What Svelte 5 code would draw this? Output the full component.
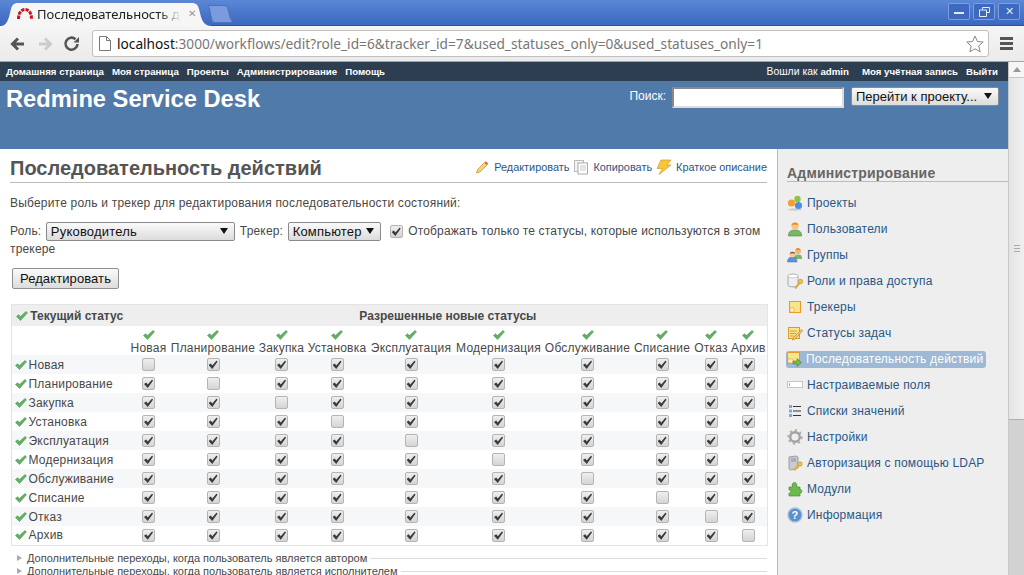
<script>
  const statuses = ['Новая', 'Планирование', 'Закупка', 'Установка', 'Эксплуатация', 'Модернизация', 'Обслуживание', 'Списание', 'Отказ', 'Архив'];
  const widths = [40, 89, 48, 63, 85, 90, 88, 61, 37, 38];

  const menu = ['Домашняя страница', 'Моя страница', 'Проекты', 'Администрирование', 'Помощь'];

  const sidebar = [
    { icon: 'projects', label: 'Проекты' },
    { icon: 'user', label: 'Пользователи' },
    { icon: 'group', label: 'Группы' },
    { icon: 'roles', label: 'Роли и права доступа' },
    { icon: 'tracker', label: 'Трекеры' },
    { icon: 'status', label: 'Статусы задач' },
    { icon: 'workflow', label: 'Последовательность действий', selected: true },
    { icon: 'field', label: 'Настраиваемые поля' },
    { icon: 'list', label: 'Списки значений' },
    { icon: 'gear', label: 'Настройки' },
    { icon: 'ldap', label: 'Авторизация с помощью LDAP' },
    { icon: 'plugin', label: 'Модули' },
    { icon: 'info', label: 'Информация' }
  ];
</script>

{#snippet check()}
  <svg class="tick" width="12" height="10" viewBox="0 0 12 10"><path d="M0.5 5.5 L2.5 3.8 L4.5 5.5 L10 0.5 L11.5 1.8 L4.5 9.5 Z" fill="#63b063" stroke="#3f8f46" stroke-width="0.5" /></svg>
{/snippet}

{#snippet icon(name)}
  <svg class="side-icon" width="16" height="16" viewBox="0 0 16 16">
    {#if name === 'projects'}
      <ellipse cx="8" cy="14.5" rx="7" ry="1.2" fill="#ccc" />
      <circle cx="10.5" cy="4" r="3.2" fill="#8cc63f" />
      <circle cx="4.5" cy="8" r="3.6" fill="#f6a02c" />
      <circle cx="11.5" cy="10.5" r="3.6" fill="#4a8fe0" />
    {:else if name === 'user'}
      <path d="M1.5 14 C1.5 10 5 9 8 9 C11 9 14.5 10 14.5 14 L14.5 15 L1.5 15 Z" fill="#78b765" stroke="#4d8a41" stroke-width="0.6" />
      <circle cx="8" cy="5" r="3.6" fill="#f7c58c" />
      <path d="M4.5 4.5 C4.5 0.5 11.5 0.5 11.5 4.5 C9.5 3 6.5 3 4.5 4.5 Z" fill="#e58f1f" />
    {:else if name === 'group'}
      <path d="M7 11 C7 8 9 7.5 11 7.5 C13 7.5 15 8 15 11 L15 12 L7 12 Z" fill="#78b765" />
      <circle cx="11" cy="4" r="3" fill="#f0b678" />
      <path d="M9 3 C9 0.5 13 0.5 13 3 Z" fill="#d98a22" />
      <path d="M0.5 15 C0.5 11 3 10 5.5 10 C8 10 10 11 10 15 Z" fill="#5a93dc" stroke="#3e6fb0" stroke-width="0.5" />
      <circle cx="5.5" cy="7.5" r="2.8" fill="#f7c9a0" />
      <path d="M2.8 7 C3 4 8 4 8.2 7 C7 6 4 6 2.8 7 Z" fill="#8a4f22" />
    {:else if name === 'roles'}
      <path d="M1 3 C1 0.5 11 0.5 11 3 L11 12 C11 14.5 1 14.5 1 12 Z" fill="#eceff2" stroke="#9a9a9a" stroke-width="0.8" />
      <ellipse cx="6" cy="3" rx="5" ry="1.8" fill="#fff" stroke="#aaa" stroke-width="0.5" />
      <path d="M8 15.5 L13 9.5" stroke="#dcae3e" stroke-width="2" />
      <circle cx="13.5" cy="8.5" r="2.2" fill="#efc650" stroke="#b98c24" stroke-width="0.6" />
    {:else if name === 'tracker'}
      <rect x="2.5" y="2.5" width="11" height="11" fill="#fbe58a" stroke="#ea9a2c" />
      <path d="M3 13 L3 9 L7 9 L7 13 Z" fill="#fff6cc" stroke="#ea9a2c" stroke-width="0.6" />
    {:else if name === 'status'}
      <rect x="1.5" y="2.5" width="11" height="11" fill="#fbe58a" stroke="#d99a32" />
      <path d="M3 6 H10 M3 8.5 H9 M3 11 H7" stroke="#c98a2a" stroke-width="0.8" />
      <path d="M6 13 L14.5 4.5 L15.5 6 L7.5 14.5 L5.5 15 Z" fill="#f4cf68" stroke="#a8782a" stroke-width="0.6" />
    {:else if name === 'workflow'}
      <rect x="1.5" y="1.5" width="12" height="11" fill="#fbe58a" stroke="#ea9a2c" />
      <path d="M2 12 L2 8 L7 8 L7 12 Z" fill="#fff6cc" stroke="#ea9a2c" stroke-width="0.6" />
      <path d="M7 10 L11 10 L11 7.5 L15.5 11.5 L11 15.5 L11 13 L7 13 Z" fill="#6fbb4f" stroke="#3f8a2f" stroke-width="0.6" />
    {:else if name === 'field'}
      <rect x="0.5" y="4.5" width="15" height="6" fill="#fff" stroke="#c6c6c6" />
      <path d="M2.5 6 V9" stroke="#999" stroke-width="0.8" />
    {:else if name === 'list'}
      <path d="M6 3.5 H14 M6 8 H14 M6 12.5 H14" stroke="#333" stroke-width="1" />
      <rect x="2" y="2" width="3" height="3" fill="#7fa6de" />
      <rect x="2" y="6.5" width="3" height="3" fill="#7fa6de" />
      <rect x="2" y="11" width="3" height="3" fill="#7fa6de" />
    {:else if name === 'gear'}
      <circle cx="8" cy="8" r="4.8" fill="none" stroke="#a2a2a2" stroke-width="2.4" />
      <circle cx="8" cy="8" r="6.6" fill="none" stroke="#adadad" stroke-width="2.2" stroke-dasharray="2.2 2.9" />
    {:else if name === 'ldap'}
      <path d="M2 2 L9 1 L11 2 L11 13 L4 15 L2 14 Z" fill="#c8ccd2" stroke="#7f8790" stroke-width="0.7" />
      <path d="M4 4 H9 M4 6 H9" stroke="#70787f" stroke-width="0.7" />
      <path d="M7 15.5 L12 10" stroke="#dcae3e" stroke-width="2" />
      <circle cx="13" cy="9" r="2.2" fill="#efc650" stroke="#b98c24" stroke-width="0.6" />
    {:else if name === 'plugin'}
      <path d="M2 6 H5.5 C4.5 3 6 1.5 7.5 1.5 C9 1.5 10.5 3 9.5 6 H13 V8.5 C15.5 8 15.5 12.5 13 12 V15 H2 V12 C4.5 12.5 4.5 8.5 2 9 Z" fill="#6cba4c" stroke="#479131" stroke-width="0.7" />
    {:else if name === 'info'}
      <circle cx="8" cy="8" r="7" fill="#5c8fd0" stroke="#a9bfdc" stroke-width="1.4" />
      <text class="info-q" x="8" y="12" text-anchor="middle">?</text>
    {/if}
  </svg>
{/snippet}

<div class="chrome">
  <div class="tabstrip">
    <div class="tab">
      <svg class="tab-shape" width="212" height="23" viewBox="0 0 212 23"><path d="M0 23 C5 23 7 20 9 14 L11 6 C12 2 14 0 18 0 L192 0 C196 0 198 2 199 6 L201 14 C203 20 206 23 212 23 Z" fill="#f6f6f6" /></svg>
      <svg class="favicon" width="16" height="12" viewBox="0 0 16 12"><path d="M1.5 11 C1.5 4 5 1.5 8 1.5 C11 1.5 14.5 4 14.5 11" fill="none" stroke="#c8161d" stroke-width="3" stroke-dasharray="3.4 1" /></svg>
      <span class="tab-title">Последовательность дей</span>
      <span class="tab-close">✕</span>
    </div>
    <svg class="newtab" width="26" height="18" viewBox="0 0 26 18"><path d="M0.5 0.5 H17 C19 0.5 20 1.5 21 4 L23 12 C23.5 14 24.5 15 25.5 17.5 H8 C6 17.5 5 16 4.5 13 L2.5 4 C2 2 1.5 1 0.5 0.5 Z" fill="#7a9bdd" stroke="#4c72bd" /></svg>
    <div class="winctl">
      <span class="winbtn"><i class="min"></i></span>
      <span class="winbtn"><svg width="11" height="10" viewBox="0 0 11 10"><path d="M3.5 2.5 V0.5 H10.5 V5.5 H8 M0.5 3 H7.5 V9.5 H0.5 Z" fill="none" stroke="#e6edf9" /></svg></span>
      <span class="winbtn close">✕</span>
    </div>
  </div>
  <div class="toolbar">
    <svg width="22" height="22" viewBox="0 0 22 22"><path d="M17 11 H6 M11 5.5 L5.5 11 L11 16.5" fill="none" stroke="#555" stroke-width="3" /></svg>
    <svg width="22" height="22" viewBox="0 0 22 22"><path d="M5 11 H16 M11 5.5 L16.5 11 L11 16.5" fill="none" stroke="#ccc" stroke-width="3" /></svg>
    <svg width="22" height="22" viewBox="0 0 22 22"><path d="M16.5 11 A6 6 0 1 1 14.5 6.2" fill="none" stroke="#555" stroke-width="2.6" /><path d="M12.5 9.5 L18 9.5 L18 4 Z" fill="#555" /></svg>
    <div class="omnibox">
      <svg width="12" height="15" viewBox="0 0 12 15"><path d="M0.5 0.5 H7.5 L11.5 4.5 V14.5 H0.5 Z M7.5 0.5 V4.5 H11.5" fill="#fff" stroke="#777" /></svg>
      <span class="url"><b>localhost</b>:3000/workflows/edit?role_id=6&amp;tracker_id=7&amp;used_statuses_only=0&amp;used_statuses_only=1</span>
      <svg class="star" width="18" height="18" viewBox="0 0 18 18"><path d="M9 1 L11.4 6.5 L17.2 7 L12.8 11 L14.1 16.8 L9 13.8 L3.9 16.8 L5.2 11 L0.8 7 L6.6 6.5 Z" fill="#fff" stroke="#888" /></svg>
    </div>
    <div class="hamburger"><i></i><i></i><i></i></div>
  </div>
</div>

<div class="page">
  <div class="viewport">
    <div class="top-menu">
      {#each menu as item}<a href="#top">{item}</a>{/each}
      <span class="spacer"></span>
      <span class="loggedas">Вошли как <b>admin</b></span>
      <a href="#top">Моя учётная запись</a>
      <a href="#top">Выйти</a>
    </div>

    <header class="header">
      <h1>Redmine Service Desk</h1>
      <div class="quick">
        <label for="q">Поиск:</label>
        <input id="q" class="search" type="text" />
        <span class="sel jump"><select><option>Перейти к проекту...</option></select></span>
      </div>
    </header>

    <div class="main">
      <div class="content">
        <div class="title-row">
          <h2>Последовательность действий</h2>
          <div class="contextual">
            <svg width="16" height="16" viewBox="0 0 16 16"><path d="M2.5 14 L3.5 10.5 L10.5 3.5 L13 6 L6 13 Z" fill="#f4d27c" stroke="#c98f2e" stroke-width="0.7" /><path d="M10.5 3.5 L13 6 L14.2 4.7 L11.8 2.2 Z" fill="#e2574c" /></svg>
            <a href="#top">Редактировать</a>
            <svg width="16" height="16" viewBox="0 0 16 16"><rect x="1.5" y="1.5" width="9" height="11" fill="#f2f2f2" stroke="#bbb" /><rect x="5" y="4" width="9.5" height="11" fill="#fff" stroke="#aaa" /><path d="M7 7 H13 M7 9 H13 M7 11 H13" stroke="#bbb" stroke-width="0.8" /></svg>
            <a href="#top">Копировать</a>
            <svg width="16" height="16" viewBox="0 0 16 16"><path d="M5 1 H15 L11 6 H15 L3 15.5 L6.5 9.5 H1 Z" fill="#f6c737" stroke="#d49a22" stroke-width="0.7" /></svg>
            <a href="#top">Краткое описание</a>
          </div>
        </div>

        <p class="intro">Выберите роль и трекер для редактирования последовательности состояний:</p>

        <div class="filters">
          Роль:
          <span class="sel role"><select><option>Руководитель</option></select></span>
          Трекер:
          <span class="sel tracker"><select><option>Компьютер</option></select></span>
          <input class="cb used" type="checkbox" checked />
          <span class="used-label">Отображать только те статусы, которые используются в этом трекере</span>
        </div>

        <button class="edit">Редактировать</button>

        <table class="workflow">
          <colgroup>
            <col class="first" />
            {#each widths as w}<col style="width: {w}px" />{/each}
          </colgroup>
          <thead>
            <tr class="head">
              <th class="cur">{@render check()} Текущий статус</th>
              <th colspan="10">Разрешенные новые статусы</th>
            </tr>
            <tr class="names">
              <td></td>
              {#each statuses as s}
                <td>{@render check()}<br />{s}</td>
              {/each}
            </tr>
          </thead>
          <tbody>
            {#each statuses as from, i}
              <tr class:odd={i % 2 === 0}>
                <td class="name">{@render check()} {from}</td>
                {#each statuses as _, j}
                  <td class="c"><input class="cb" type="checkbox" checked={i !== j} /></td>
                {/each}
              </tr>
            {/each}
          </tbody>
        </table>

        <div class="extra">
          <div class="extra-row"><span class="tri"></span><span>Дополнительные переходы, когда пользователь является автором</span><span class="line"></span></div>
          <div class="extra-row"><span class="tri"></span><span>Дополнительные переходы, когда пользователь является исполнителем</span><span class="line"></span></div>
        </div>
      </div>

      <aside class="sidebar">
        <h3>Администрирование</h3>
        <ul>
          {#each sidebar as item}
            <li class:selected={item.selected}>
              {@render icon(item.icon)}
              <a href="#top">{item.label}</a>
            </li>
          {/each}
        </ul>
      </aside>
    </div>
  </div>

  <div class="scrollbar">
    <div class="sb-btn"><i></i></div>
    <div class="sb-thumb"><i></i><i></i><i></i></div>
    <div class="sb-track"></div>
  </div>
</div>

<style>
  :global(body) {
    margin: 0;
    overflow: hidden;
    font-family: "Liberation Sans", Arial, sans-serif;
    font-size: 12px;
    color: #484848;
  }

  /* browser frame */
  .chrome { height: 62px; display: flex; flex-direction: column; }
  .tabstrip {
    height: 26px;
    background: linear-gradient(#5a87d6, #3c68bf);
    border-bottom: 1px solid #2e5199;
    box-sizing: border-box;
    display: flex;
    align-items: flex-end;
  }
  .tab {
    position: relative;
    width: 212px;
    height: 23px;
    box-sizing: border-box;
    display: flex;
    align-items: center;
    padding: 0 0 2px 17px;
    gap: 4px;
    margin-bottom: -1px;
  }
  .tab-shape { position: absolute; left: 0; top: 0; }
  .favicon, .tab-title, .tab-close { position: relative; }
  .tab-title {
    width: 144px;
    overflow: hidden;
    white-space: nowrap;
    font-family: "Noto Sans", sans-serif;
    font-size: 13px;
    color: #222;
    -webkit-mask-image: linear-gradient(to right, #000 85%, transparent);
    mask-image: linear-gradient(to right, #000 85%, transparent);
  }
  .tab-close { color: #999; font-size: 10px; margin-left: 3px; }
  .newtab { margin: 0 0 2px -5px; }
  .winctl { margin-left: auto; display: flex; gap: 3px; align-self: flex-start; padding: 3px 4px 0 0; }
  .winbtn {
    width: 22px;
    height: 17px;
    box-sizing: border-box;
    background: #3d69c0;
    border: 1px solid #7d9ddc;
    border-radius: 2px;
    color: #dfe8f8;
    font-size: 11px;
    line-height: 15px;
    text-align: center;
    display: flex;
    align-items: center;
    justify-content: center;
  }
  .winbtn .min { width: 10px; height: 2px; background: #e6edf9; margin-top: 3px; }
  .toolbar {
    flex: 1;
    background: linear-gradient(#f5f5f5, #ebebeb);
    border-bottom: 1px solid #a4a4a4;
    display: flex;
    align-items: center;
    padding-left: 7px;
    gap: 5px;
  }
  .omnibox {
    width: 897px;
    height: 27px;
    box-sizing: border-box;
    margin-left: 4px;
    background: #fff;
    border: 1px solid #c0c0c0;
    border-radius: 3px;
    display: flex;
    align-items: center;
    padding-left: 6px;
    gap: 6px;
  }
  .url {
    flex: 1;
    font-family: "Noto Sans", sans-serif;
    font-size: 13.7px;
    color: #777;
    white-space: nowrap;
  }
  .url b { font-weight: normal; color: #111; }
  .star { margin-right: 4px; }
  .hamburger { margin-left: 6px; display: flex; flex-direction: column; gap: 2px; }
  .hamburger i { display: block; width: 13px; height: 3px; background: #555; }

  /* page */
  .page { height: 513px; display: flex; overflow: hidden; }
  .viewport { width: 1008px; }
  .top-menu {
    height: 19px;
    background: #2c3e50;
    color: #fff;
    display: flex;
    align-items: center;
    padding: 0 10px 0 6px;
    font-size: 9.7px;
    font-weight: bold;
    gap: 8px;
    white-space: nowrap;
  }
  .top-menu a { color: #fff; text-decoration: none; }
  .spacer { flex: 1; }
  .loggedas { font-weight: normal; font-size: 10.4px; margin-right: 5px; }
  .loggedas b { font-weight: bold; font-size: 9.7px; }
  .header {
    height: 68px;
    box-sizing: border-box;
    background: #507aaa;
    color: #fff;
    display: flex;
    justify-content: space-between;
    padding: 5px 9px 0 6px;
  }
  h1 { margin: 0; font-size: 23.7px; line-height: 26px; font-weight: bold; }
  .quick { display: flex; align-items: flex-start; padding-top: 1px; font-size: 12px; }
  .quick label { margin: 2px 6px 0 0; }
  .search {
    width: 172px;
    height: 21px;
    box-sizing: border-box;
    border: 2px inset #ddd;
    background: #fff;
    margin: 0 7px 0 0;
    padding: 0;
  }

  .sel { position: relative; display: inline-block; height: 19px; vertical-align: middle; }
  .sel::after {
    content: "";
    position: absolute;
    right: 7px;
    top: 6px;
    border: 4px solid transparent;
    border-top: 6px solid #111;
    border-bottom: 0;
    pointer-events: none;
  }
  .sel select {
    appearance: none;
    display: block;
    width: 100%;
    height: 19px;
    box-sizing: border-box;
    border: 1px solid #8a8a8a;
    border-radius: 2px;
    background: linear-gradient(#fafafa, #dcdcdc);
    color: #111;
    font: 13px "Liberation Sans", sans-serif;
    letter-spacing: 0.2px;
    padding: 0 4px;
  }
  .jump { width: 148px; }
  .jump select { letter-spacing: 0; }
  .role { width: 189px; margin: 0 1.5px 0 1px; }
  .tracker { width: 93px; margin: 0 1.5px 0 1px; }

  .main { display: flex; min-height: 500px; letter-spacing: 0.2px; }
  .content { width: 757px; padding: 0 10px; background: #fff; }
  .title-row {
    display: flex;
    justify-content: space-between;
    align-items: flex-end;
    height: 33px;
    border-bottom: 1px solid #bbb;
  }
  h2 { margin: 0; font-size: 20px; line-height: 24px; padding-bottom: 2px; color: #555; letter-spacing: 0; }
  .contextual { display: flex; align-items: center; padding-bottom: 7px; font-size: 10.9px; letter-spacing: 0; }
  .contextual a { margin: 0 4px 0 4px; }
  .contextual a:last-child { margin-right: 0; }
  a { color: #2a5685; text-decoration: none; }
  .intro { margin: 12px 0 0; line-height: 16px; }

  .filters { margin-top: 11px; line-height: 17px; height: 38px; letter-spacing: 0.17px; }

  .cb {
    appearance: none;
    width: 13px;
    height: 13px;
    box-sizing: border-box;
    margin: 0;
    border: 1px solid #b4b4b4;
    border-radius: 2px;
    background: linear-gradient(#efefef, #d4d4d4);
    position: relative;
  }
  .cb:checked::after {
    content: "";
    position: absolute;
    inset: 1px;
    background: #3a3a3a;
    clip-path: polygon(0 55%, 25% 40%, 42% 60%, 90% 5%, 100% 20%, 42% 100%);
  }
  .used { margin: 0 2px 0 4px; vertical-align: middle; }

  .edit {
    display: block;
    margin: 8px 0 0 2px;
    width: 107px;
    height: 21px;
    border: 1px solid #8f8f8f;
    border-radius: 2px;
    background: linear-gradient(#fafafa, #dcdcdc);
    color: #111;
    font: 13px "Liberation Sans", sans-serif;
    letter-spacing: 0.1px;
    padding: 0;
  }

  .workflow {
    margin: 15px 0 0 1px;
    width: 756px;
    table-layout: fixed;
    border-collapse: collapse;
    border: 1px solid #e4e4e4;
  }
  .first { width: 117px; }
  .workflow td, .workflow th { padding: 0; white-space: nowrap; }
  .head th { height: 21px; background: #eee; font-weight: bold; text-align: center; color: #484848; letter-spacing: 0; }
  .head .cur { text-align: left; padding-left: 4px; overflow: visible; }
  .head .tick { margin-right: -1px; }
  .names td { height: 29px; text-align: center; line-height: 13px; vertical-align: bottom; }
  tbody tr { height: 19px; }
  tbody tr.odd { background: #f6f7f8; }
  .name { padding-left: 3px !important; }
  .name .tick { margin-right: -2px; }
  .c { text-align: center; line-height: 0; vertical-align: middle; }
  .tick { vertical-align: -1px; }

  .extra { margin-top: 6px; padding-left: 6px; font-size: 11px; letter-spacing: 0; }
  .extra-row { display: flex; align-items: center; height: 13px; gap: 3px; }
  .tri {
    border: 3.5px solid transparent;
    border-left: 5px solid #aaa;
    border-right: 0;
    margin: 0 2px 0 1px;
  }
  .line { flex: 1; border-top: 1px solid #ddd; }

  .sidebar {
    width: 231px;
    box-sizing: border-box;
    background: #eee;
    border-left: 1px solid #bbb;
    padding: 16px 0 0 9px;
  }
  h3 {
    margin: 0;
    font-size: 14px;
    line-height: 16px;
    border-bottom: 1px solid #bbb;
    color: #666;
  }
  ul { list-style: none; margin: 8px 0 0; padding: 0; }
  li { height: 26px; display: flex; align-items: center; gap: 4px; }
  li a { line-height: 17px; }
  .selected { gap: 0; }
  .selected .side-icon { position: relative; z-index: 1; margin-left: -1px; }
  .selected a {
    background: #9db9d5;
    color: #fff;
    border-radius: 3px;
    margin-left: -16px;
    padding: 0 2px 0 20px;
    width: 178px;
  }
  .info-q { font: bold 11px "Liberation Sans", sans-serif; fill: #fff; }

  .scrollbar { width: 16px; display: flex; flex-direction: column; border-left: 1px solid #c8c8c8; box-sizing: border-box; background: #e8e8e8; }
  .sb-btn { height: 15px; background: #f6f6f6; border-bottom: 1px solid #c8c8c8; display: flex; align-items: center; justify-content: center; }
  .sb-btn i { border: 4px solid transparent; border-bottom: 5px solid #999; border-top: 0; }
  .sb-thumb {
    height: 341px;
    background: linear-gradient(to right, #e4e4e4, #f0f0f0);
    border-bottom: 1px solid #b0b0b0;
    display: flex;
    flex-direction: column;
    align-items: center;
    justify-content: center;
    gap: 2px;
  }
  .sb-thumb i { width: 6px; height: 1px; background: #aaa; }
  .sb-track { flex: 1; background: #d2d2d2; }
</style>
